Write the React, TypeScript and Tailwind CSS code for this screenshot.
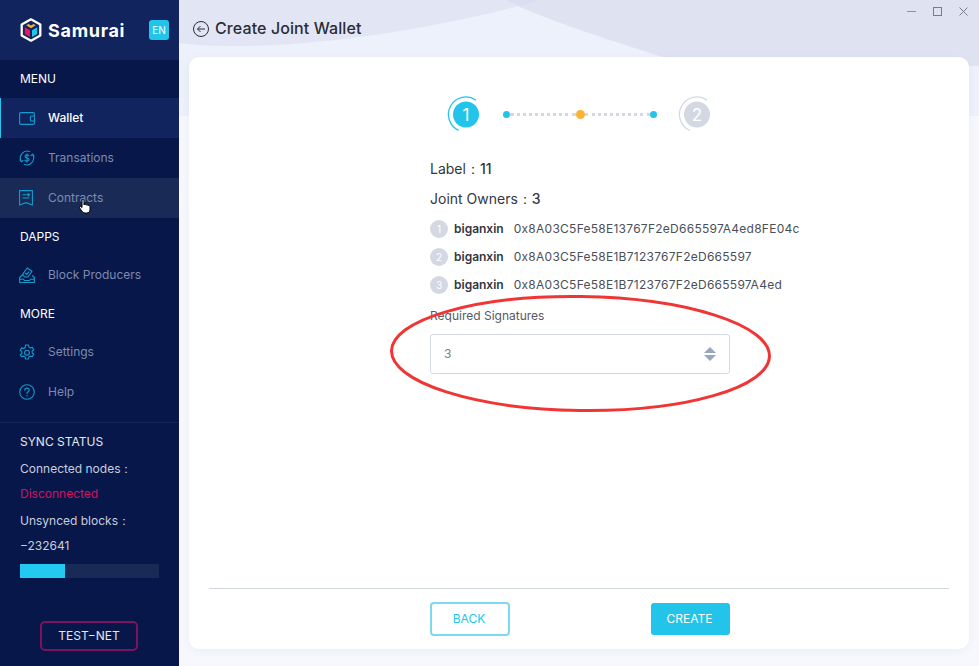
import type { ReactNode } from "react";

const font = { fontFamily: "Inter, 'Liberation Sans', sans-serif" };

const Logo = () => (
  <svg width="22" height="24" viewBox="0 0 22 24" fill="none">
    <path d="M11 1.300 20.300 6.500v11L11 22.700 1.700 17.500v-11z" stroke="#fff" strokeWidth="2.300" strokeLinejoin="round" />
    <path d="M6.200 7.300 8.500 6 11 7.500 13.500 6l2.300 1.300L11 10.200z" fill="#f6b22f" />
    <path d="M4.800 9.200 10 12.300V19l-5.200-3z" fill="#e8185f" />
    <path d="M17.200 9.200 12 12.300V19l5.200-3z" fill="#22c4ea" />
  </svg>
);

const WalletIcon = () => (
  <svg width="16" height="13" viewBox="0 0 16 13" fill="none" stroke="#139ccb" strokeWidth="1.100">
    <rect x="0.600" y="0.600" width="14.800" height="11.800" rx="1.200" />
    <path d="M15.400 4h-3a1 1 0 0 0-1 1v3a1 1 0 0 0 1 1h3" />
  </svg>
);

const DollarIcon = () => (
  <svg width="16" height="16" viewBox="0 0 16 16" fill="none" stroke="#139ccb" strokeWidth="1.100" strokeLinecap="round">
    <path d="M2.300 11.500A6.900 6.900 0 0 1 10.500 1.500" />
    <path d="M13.700 4.500A6.900 6.900 0 0 1 5.500 14.500" />
    <path d="M1 10l1.300 1.800L4 10.500M15 6l-1.300-1.800L12 5.500" />
    <path d="M10 5.800C9.500 5 8.800 4.800 8 4.800c-1.100 0-2 .6-2 1.600 0 2.200 4.100 1 4.100 3.200 0 1-.9 1.600-2.100 1.600-.9 0-1.700-.3-2.200-1.100M8 3.800v8.400" />
  </svg>
);

const ContractIcon = () => (
  <svg width="14" height="16" viewBox="0 0 14 16" fill="none" stroke="#139ccb" strokeWidth="1.100">
    <path d="M.6.600h12.800v14.400L7 12.700.6 15z" />
    <path d="M3.500 4.800h7M3.500 8h7M8.800 3.300l1.700 1.500-1.700 1.500" />
  </svg>
);

const BallotIcon = () => (
  <svg width="16" height="16" viewBox="0 0 16 16" fill="none" stroke="#139ccb" strokeWidth="1.100" strokeLinejoin="round">
    <path d="M3.800 7.500.6 10.500v5h14.800v-5l-2.200-2" />
    <path d="M.6 12.300h4l.8 1.200h5.200l.8-1.200h4" />
    <path d="M3.600 7.400 8.200 1l4.800 3.300-4 5.700H5.500z" />
    <path d="m6.200 6 1.500 1.300 2.300-2.700" />
  </svg>
);

const GearIcon = () => (
  <svg width="16" height="16" viewBox="0 0 24 24" fill="none" stroke="#139ccb" strokeWidth="1.700" strokeLinejoin="round">
    <path d="M9.800 1.500h4.400l.7 3.200 1.900 1.100 3.100-1 2.200 3.800-2.400 2.200v2.400l2.400 2.200-2.200 3.800-3.100-1-1.900 1.100-.7 3.200H9.800l-.7-3.200-1.900-1.100-3.100 1L1.900 16.400l2.400-2.200v-2.400L1.900 9.600l2.200-3.800 3.100 1 1.900-1.100z" />
    <circle cx="12" cy="13" r="3.600" />
  </svg>
);

const HelpIcon = () => (
  <svg width="16" height="16" viewBox="0 0 16 16" fill="none" stroke="#139ccb" strokeWidth="1.100" strokeLinecap="round">
    <circle cx="8" cy="8" r="7.300" />
    <path d="M5.800 6.200c0-1.300 1-2.100 2.200-2.100s2.200.8 2.200 2c0 1.700-2.200 1.600-2.200 3.500" />
    <path d="M8 11.600v.3" />
  </svg>
);

const NavItem = ({
  icon,
  label,
  active,
  hover,
  short,
}: {
  icon: ReactNode;
  label: string;
  active?: boolean;
  hover?: boolean;
  short?: boolean;
}) => (
  <div
    className={`flex items-center pl-[18px] text-[12px] border-l ${short ? "h-[38px]" : "h-10"} ${
      active
        ? "bg-[#12245d] border-[#22c4ea] text-white font-medium"
        : hover
          ? "bg-[#192a57] border-transparent text-[#7f8bae]"
          : "border-transparent text-[#7f8bae]"
    }`}
  >
    <span className="w-[29px] flex items-center">{icon}</span>
    {label}
  </div>
);

const SectionTitle = ({ children, low }: { children: ReactNode; low?: boolean }) => (
  <div className={`h-[38px] flex items-center pl-5 text-[12px] text-white ${low ? "pt-[2px]" : ""}`}>{children}</div>
);

const Sidebar = () => (
  <aside className="w-[179px] shrink-0 h-full bg-[#07174a] flex flex-col">
    <div className="h-[60px] bg-[#12245d] flex items-center pl-5 pr-[10px]">
      <Logo />
      <span className="ml-[6px] text-white text-[18px] font-bold tracking-[0.7px]">Samurai</span>
      <span className="ml-auto w-5 h-5 rounded-[3px] bg-[#22c4ea] text-white text-[10px] flex items-center justify-center">
        EN
      </span>
    </div>
    <SectionTitle>MENU</SectionTitle>
    <NavItem icon={<WalletIcon />} label="Wallet" active />
    <NavItem icon={<DollarIcon />} label="Transations" />
    <NavItem icon={<ContractIcon />} label="Contracts" hover />
    <SectionTitle>DAPPS</SectionTitle>
    <NavItem icon={<BallotIcon />} label="Block Producers" short />
    <SectionTitle low>MORE</SectionTitle>
    <NavItem icon={<GearIcon />} label="Settings" />
    <NavItem icon={<HelpIcon />} label="Help" />
    <div className="mt-[10px] border-t border-[#14255b] pl-5 pr-5 text-[12px] text-[#c7cede]">
      <div className="mt-[10px] h-[18px] leading-[18px] text-white/90">SYNC STATUS</div>
      <div className="mt-[9px] h-[18px] leading-[18px]">Connected nodes：</div>
      <div className="mt-[7px] h-[18px] leading-[18px] text-[#d6105f]">Disconnected</div>
      <div className="mt-[9px] h-[18px] leading-[18px]">Unsynced blocks：</div>
      <div className="mt-[7px] h-[18px] leading-[18px]">−232641</div>
      <div className="mt-[9px] h-[14px] w-[139px] bg-[#192a57]">
        <div className="h-full w-[45px] bg-[#22c9f0]" />
      </div>
      <div className="mt-[43px] ml-5 w-[98px] h-[30px] rounded-[5px] border-2 border-[#7d1260] flex items-center justify-center text-white/90">
        TEST−NET
      </div>
    </div>
  </aside>
);

const StepCircle = ({ n, color }: { n: number; color: string }) => (
  <div className="w-8 h-[34px] shrink-0">
    <svg className="overflow-visible" width="32" height="36" viewBox="0 0 32 36" fill="none">
      <path d="M10.600 33.400A17.500 17.500 0 1 1 28 3.200" stroke={color} strokeWidth="1.300" />
      <circle cx="18" cy="17.500" r="13" fill={color} />
      <text x="18" y="23.500" textAnchor="middle" fontSize="17" fill="#fff" fontFamily="Inter, sans-serif">
        {n}
      </text>
    </svg>
  </div>
);

const Stepper = () => (
  <div className="ml-[259px] flex items-center h-[34px]">
    <StepCircle n={1} color="#22c4ea" />
    <div className="ml-[23px] mr-[22px] w-[154px] flex items-center">
      <span className="w-[7px] h-[7px] rounded-full bg-[#22c4ea]" />
      <span className="flex-1 border-t-[3px] border-dotted border-[#d3d8e2]" />
      <span className="w-[9px] h-[9px] rounded-full bg-[#f9b233]" />
      <span className="flex-1 border-t-[3px] border-dotted border-[#d3d8e2]" />
      <span className="w-[7px] h-[7px] rounded-full bg-[#22c4ea]" />
    </div>
    <StepCircle n={2} color="#d3d8e2" />
  </div>
);

const owners = [
  "0x8A03C5Fe58E13767F2eD665597A4ed8FE04c",
  "0x8A03C5Fe58E1B7123767F2eD665597",
  "0x8A03C5Fe58E1B7123767F2eD665597A4ed",
];

const Card = () => (
  <section className="mx-[10px] h-[592px] rounded-[10px] bg-white shadow-[0_2px_8px_rgba(40,60,140,0.06)] flex flex-col">
    <div className="flex-1 pt-[40px]">
      <Stepper />
      <div className="w-[300px] ml-[241px] text-[#33373f]">
        <div className="mt-[28px] h-5 leading-5 text-[14px]">
          Label：<span className="font-medium">11</span>
        </div>
        <div className="mt-[10px] h-5 leading-5 text-[14px]">
          Joint Owners：<span className="font-medium">3</span>
        </div>
        <div className="mt-[6px]">
          {owners.map((addr, i) => (
            <div key={addr} className="h-[28px] flex items-center text-[12px] whitespace-nowrap">
              <span className="w-[18px] h-[18px] shrink-0 rounded-full bg-[#d3d8e2] text-white text-[10px] flex items-center justify-center">
                {i + 1}
              </span>
              <span className="ml-[6px] font-semibold">biganxin</span>
              <span className="ml-[10px] text-[#4a4f59] tracking-[0.26px]">{addr}</span>
            </div>
          ))}
        </div>
        <div className="mt-[8px] h-[18px] leading-[18px] text-[12px] text-[#555a64]">Required Signatures</div>
        <div className="mt-[9px] h-10 rounded-[3px] border border-[#d3d8e2] flex items-center pl-[13px] pr-[13px] text-[12px] text-[#7a808c]">
          3
          <span className="ml-auto flex flex-col gap-[2px]">
            <span className="w-0 h-0 border-x-[6px] border-x-transparent border-b-[6px] border-b-[#9aa6bb]" />
            <span className="w-0 h-0 border-x-[6px] border-x-transparent border-t-[6px] border-t-[#9aa6bb]" />
          </span>
        </div>
      </div>
    </div>
    <div className="mx-5 border-t border-[#d3d8de]" />
    <div className="h-[60px] pt-[13px]">
      <div className="w-[300px] ml-[241px] flex justify-between items-center text-[12px]">
        <button className="w-[80px] h-[34px] rounded-[4px] border-2 border-[#7dd9ee] text-[#22c4ea] pr-[2px]">BACK</button>
        <button className="w-[79px] h-[32px] rounded-[3px] bg-[#22c4ea] text-white pr-[2px]">CREATE</button>
      </div>
    </div>
  </section>
);

const WindowControls = () => (
  <div className="absolute right-[11px] top-[7px] flex items-center gap-[17px]">
    <svg width="9" height="9" viewBox="0 0 9 9" stroke="#8d92a3" strokeWidth="1"><path d="M0 4.500h9" /></svg>
    <svg width="9" height="9" viewBox="0 0 9 9" fill="none" stroke="#777c8e" strokeWidth="1"><rect x="0.500" y="0.500" width="8" height="8" /></svg>
    <svg width="9" height="9" viewBox="0 0 9 9" stroke="#777c8e" strokeWidth="1"><path d="m.5.500 8 8M8.500.500l-8 8" /></svg>
  </div>
);

const Backdrop = () => (
  <svg className="absolute left-0 top-0" width="800" height="116" viewBox="0 0 800 116">
    <rect width="800" height="116" fill="#edf1fb" />
    <path d="M800 66 484 57C420 37 360 17 326 0H800z" fill="#dfe3f1" />
    <path d="M0 0H362C300 18 170 46 60 46 30 46 15 45 0 43z" fill="#e2e6f4" />
    <path d="M326 0H362L341 6z" fill="#d9def0" />
  </svg>
);

const HandCursor = () => (
  <svg className="absolute left-[79px] top-[199px]" width="12" height="15" viewBox="0 0 12 15">
    <path
      d="M3 1.500c0-1.300 2-1.300 2 0V6l.500-.5c1-.4 1.500.1 1.800.6.800-.5 1.500-.2 1.800.4.800-.3 1.900.1 1.900 1.200v3c0 2-1.300 3.300-3.300 3.300H6c-1.500 0-2.400-.8-3.200-2L.7 9C0 8 1 7 2 7.700l1 .8z"
      fill="#fff"
      stroke="#000"
      strokeWidth="1"
    />
  </svg>
);

export default function App() {
  return (
    <div className="relative w-[979px] h-[666px] overflow-hidden flex bg-[#f7f8fd]" style={font}>
      <Sidebar />
      <main className="relative flex-1 h-full">
        <Backdrop />
        <WindowControls />
        <div className="relative">
          <div className="h-[57px] flex items-center pl-[14px] text-[16px] font-medium text-[#2a2d35]">
            <svg width="16" height="16" viewBox="0 0 16 16" fill="none" stroke="#2a2d35" strokeWidth="1">
              <circle cx="8" cy="8" r="7.500" />
              <path d="M12 8H4.500M7.500 5 4.500 8l3 3" />
            </svg>
            <span className="ml-[6px] -mt-[2px] tracking-[0.1px]">Create Joint Wallet</span>
          </div>
          <Card />
        </div>
      </main>
      <HandCursor />
      {/* red annotation ring */}
      <svg className="absolute left-[385px] top-[290px] pointer-events-none" width="392" height="126" viewBox="0 0 392 126" fill="none">
        <ellipse cx="195.500" cy="63.500" rx="189" ry="57" stroke="#f03535" strokeWidth="3" transform="rotate(0.800 195 63)" />
      </svg>
    </div>
  );
}
